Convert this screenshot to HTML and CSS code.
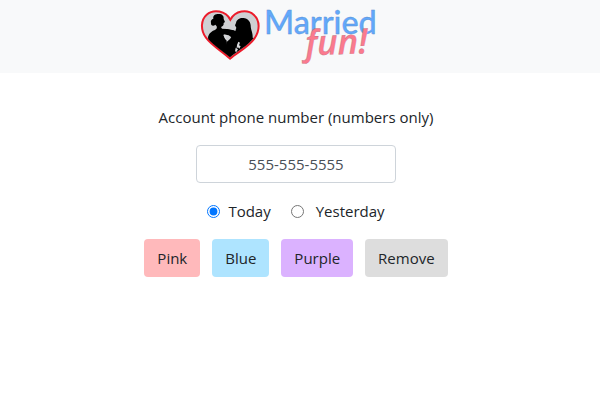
FILE: index.html
```html
<!DOCTYPE html>
<html lang="en">
<head>
  <meta charset="utf-8">
  <title>Married fun!</title>
  <link rel="stylesheet" href="styles.css">
</head>
<body>
  <header class="navbar">
    <svg class="logo" viewBox="0 0 552 180" role="img" aria-label="Married fun!">
      <path d="M102 161 C81 140 48 123 30 98 C13 75 14 45 32 29 C53 11 89 17 103 44 C118 17 153 11 173 29 C193 47 192 77 175 101 C158 126 125 141 102 161Z" fill="#cfd0d3" stroke="#ec1c2b" stroke-width="6"/>
      <!-- groom -->
      <path d="M55 76 C61 74 64 70 62 64 L58 59 C52 65 44 62 45 54 C43 48 47 42 52 41 C50 31 58 27 68 27 C79 27 84 33 83 42 L87 51 L83 54 C84 62 79 65 75 66 L78 71 L93 72 L113 76 L121 80 L121 97 L106 97 L98 91 L90 89 L82 90 L86 99 L92 107 L92 122 L99 138 L102 157 C80 138 53 122 37 103 C33 92 44 80 55 76Z" fill="#000"/>
      <!-- bride -->
      <path d="M118 78 L121 68 L117 61 L120 54 C122 43 132 38 142 39 C156 41 163 49 164 61 C164 75 171 83 170 98 L173 99 C155 122 124 139 102 157 L88 134 L91 112 L102 102 L108 92 L104 85 L83 78 L90 72Z" fill="#000"/>
      <path d="M83 88 L94 91 L90 96 L91 105 L87 101Z M123 120 L127 110 L132 113 L129 121 L134 124 L130 131 L126 127 L122 130Z M117 139 L119 128 L126 133 L121 141Z" fill="#d8d9dc"/>
      <text class="logo-married" x="204" y="87">Married</text>
      <text class="logo-fun" x="329" y="151" transform="rotate(-2 329 151)">fun!</text>
    </svg>
  </header>

  <main class="content">
    <form class="phone-form">
      <label class="phone-label" for="phone">Account phone number (numbers only)</label>
      <input class="phone-input" type="text" id="phone" placeholder="555-555-5555">

      <div class="days">
        <input type="radio" id="today" name="day" checked>
        <label class="today-label" for="today">Today</label>
        <input type="radio" id="yesterday" name="day">
        <label for="yesterday">Yesterday</label>
      </div>

      <div class="buttons">
        <button type="button" class="btn pink">Pink</button>
        <button type="button" class="btn blue">Blue</button>
        <button type="button" class="btn purple">Purple</button>
        <button type="button" class="btn remove">Remove</button>
      </div>
    </form>
  </main>
</body>
</html>
```

FILE: styles.css
```css
* {
  box-sizing: border-box;
}

body {
  margin: 0;
  font-family: "Segoe UI", "Open Sans", "Noto Sans", sans-serif;
  font-size: 15px;
  line-height: 24px;
  color: #212529;
  background: #fff;
}

.navbar {
  display: flex;
  justify-content: center;
  padding: 5px 24px 8px 0;
  background: #f8f9fa;
}

.logo {
  display: block;
  width: 184px;
  height: 60px;
  overflow: visible;
}

.logo-married {
  font-family: Lato, sans-serif;
  font-size: 97px;
  font-weight: 500;
  fill: #62a8fb;
  stroke: #5b8fce;
  stroke-width: 1px;
}

.logo-fun {
  font-family: "Open Sans", sans-serif;
  font-size: 104px;
  font-style: italic;
  font-weight: 600;
  fill: #fb7a8e;
  stroke: #b9707f;
  stroke-width: 1px;
}

.content {
  padding: 32px 8px 0 0;
}

.phone-form {
  display: flex;
  flex-direction: column;
  align-items: center;
}

.phone-label {
  margin-bottom: 16px;
}

.phone-input {
  width: 200px;
  height: 38px;
  padding: 6px 12px;
  border: 1px solid #ced4da;
  border-radius: 4px;
  font: inherit;
  text-align: center;
  color: #495057;
}

.phone-input::placeholder {
  color: #495057;
}

.days {
  display: flex;
  align-items: center;
  margin: 16px 0;
}

.days input {
  width: 13px;
  height: 13px;
  margin: 0 12px 0 0;
}

.days input:checked {
  margin-right: 8px;
}

.today-label {
  margin-right: 20px;
}

.buttons {
  display: flex;
  gap: 12px;
}

.btn {
  padding: 6px 12px;
  border: 1px solid transparent;
  border-radius: 4px;
  font: inherit;
  color: #212529;
  cursor: pointer;
}

.pink {
  background: #ffb9bb;
}

.blue {
  background: #aee4ff;
}

.purple {
  background: #dbb2ff;
}

.remove {
  background: #ddd;
}
```
